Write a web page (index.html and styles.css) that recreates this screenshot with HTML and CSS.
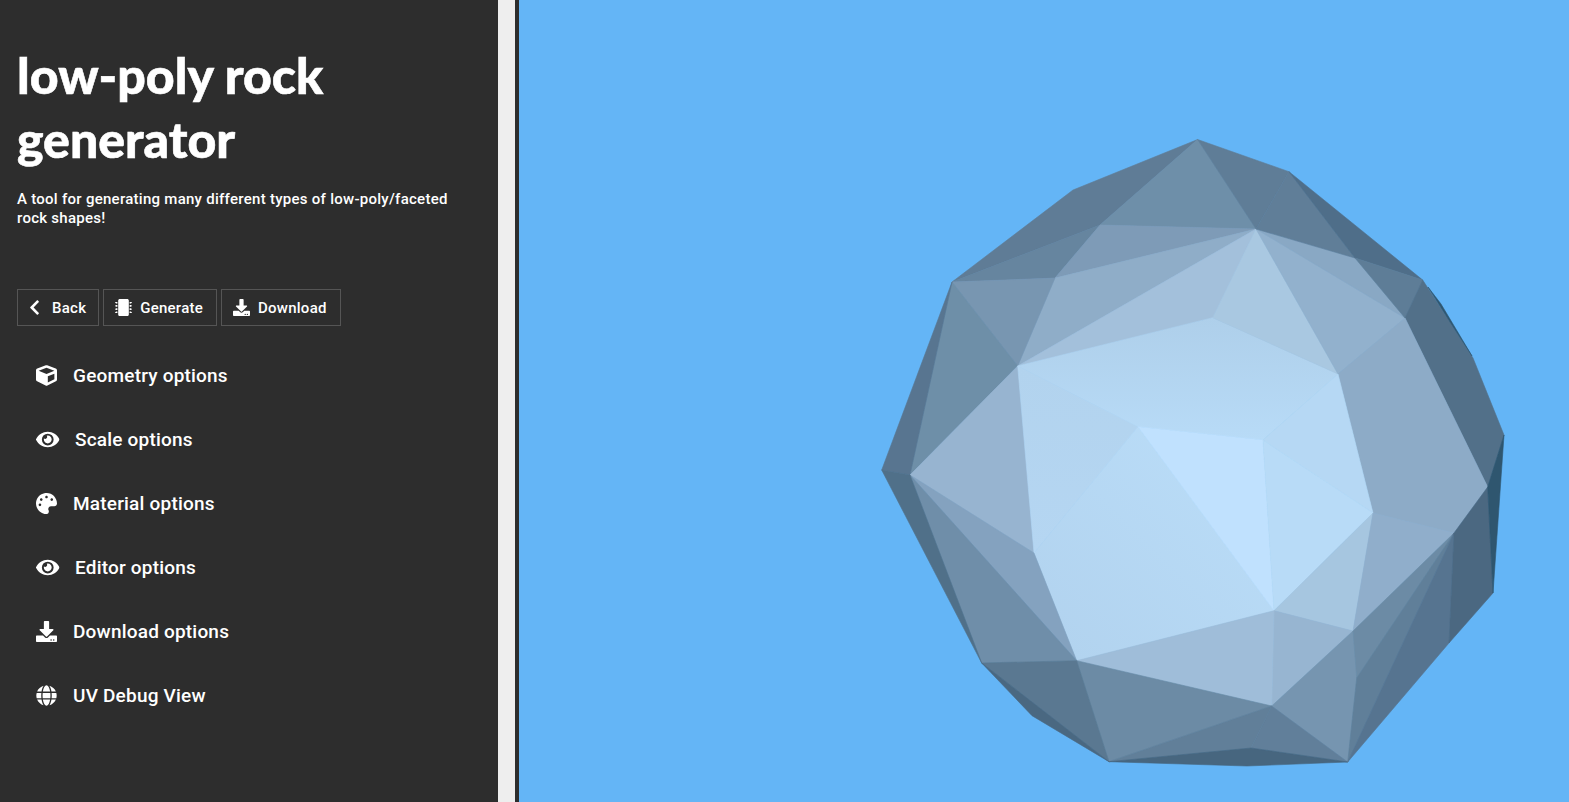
FILE: index.html
```html
<!DOCTYPE html>
<html lang="en">
<head>
<meta charset="utf-8">
<title>low-poly rock generator</title>
<link rel="stylesheet" href="styles.css">
</head>
<body>
<svg class="defs" aria-hidden="true">
  <symbol id="i-chevron" viewBox="0 0 320 512"><path d="M34.52 239.03L228.87 44.69c9.37-9.37 24.57-9.37 33.94 0l22.67 22.67c9.36 9.36 9.37 24.52.04 33.9L131.49 256l154.02 154.75c9.34 9.38 9.32 24.54-.04 33.9l-22.67 22.67c-9.37 9.37-24.57 9.37-33.94 0L34.52 272.97c-9.37-9.37-9.37-24.57 0-33.94z"/></symbol>
  <symbol id="i-chip" viewBox="0 0 512 512"><path d="M416 48v416c0 26.51-21.49 48-48 48H144c-26.51 0-48-21.49-48-48V48c0-26.51 21.49-48 48-48h224c26.51 0 48 21.49 48 48zm96 58v12a6 6 0 0 1-6 6h-18v6a6 6 0 0 1-6 6h-42V88h42a6 6 0 0 1 6 6v6h18a6 6 0 0 1 6 6zm0 96v12a6 6 0 0 1-6 6h-18v6a6 6 0 0 1-6 6h-42v-48h42a6 6 0 0 1 6 6v6h18a6 6 0 0 1 6 6zm0 96v12a6 6 0 0 1-6 6h-18v6a6 6 0 0 1-6 6h-42v-48h42a6 6 0 0 1 6 6v6h18a6 6 0 0 1 6 6zm0 96v12a6 6 0 0 1-6 6h-18v6a6 6 0 0 1-6 6h-42v-48h42a6 6 0 0 1 6 6v6h18a6 6 0 0 1 6 6zM30 376h42v48H30a6 6 0 0 1-6-6v-6H6a6 6 0 0 1-6-6v-12a6 6 0 0 1 6-6h18v-6a6 6 0 0 1 6-6zm0-96h42v48H30a6 6 0 0 1-6-6v-6H6a6 6 0 0 1-6-6v-12a6 6 0 0 1 6-6h18v-6a6 6 0 0 1 6-6zm0-96h42v48H30a6 6 0 0 1-6-6v-6H6a6 6 0 0 1-6-6v-12a6 6 0 0 1 6-6h18v-6a6 6 0 0 1 6-6zm0-96h42v48H30a6 6 0 0 1-6-6v-6H6a6 6 0 0 1-6-6v-12a6 6 0 0 1 6-6h18v-6a6 6 0 0 1 6-6z"/></symbol>
  <symbol id="i-download" viewBox="0 0 512 512"><path d="M216 0h80c13.3 0 24 10.7 24 24v168h87.7c17.8 0 26.7 21.5 14.1 34.1L269.7 378.3c-7.5 7.5-19.8 7.5-27.3 0L90.1 226.1c-12.6-12.6-3.7-34.1 14.1-34.1H192V24c0-13.3 10.7-24 24-24zm296 376v112c0 13.3-10.7 24-24 24H24c-13.3 0-24-10.7-24-24V376c0-13.3 10.7-24 24-24h146.7l49 49c20.1 20.1 52.5 20.1 72.6 0l49-49H488c13.3 0 24 10.7 24 24zm-124 88c0-11-9-20-20-20s-20 9-20 20 9 20 20 20 20-9 20-20zm64 0c0-11-9-20-20-20s-20 9-20 20 9 20 20 20 20-9 20-20z"/></symbol>
  <symbol id="i-cube" viewBox="0 0 512 512"><path d="M239.1 6.3l-208 78c-18.7 7-31.1 25-31.1 45v225.1c0 18.2 10.3 34.8 26.5 42.9l208 104c13.5 6.8 29.4 6.8 42.9 0l208-104c16.3-8.1 26.5-24.8 26.5-42.9V129.3c0-20-12.4-37.9-31.1-44.9l-208-78C262 2.2 250 2.2 239.1 6.3zM256 68.4l192 72v1.1l-192 78-192-78v-1.1l192-72zm32 356V275.5l160-65v133.9l-160 80z"/></symbol>
  <symbol id="i-eye" viewBox="0 0 576 512"><path d="M572.52 241.4C518.29 135.59 410.93 64 288 64S57.68 135.64 3.48 241.41a32.35 32.35 0 0 0 0 29.19C57.71 376.41 165.07 448 288 448s230.32-71.64 284.52-177.41a32.35 32.35 0 0 0 0-29.19zM288 400a144 144 0 1 1 144-144 143.93 143.93 0 0 1-144 144zm0-240a95.31 95.31 0 0 0-25.31 3.79 47.85 47.85 0 0 1-66.9 66.9A95.78 95.78 0 1 0 288 160z"/></symbol>
  <symbol id="i-palette" viewBox="0 0 512 512"><path d="M204.3 5C104.9 24.4 24.8 104.3 5.2 203.4c-37 187 131.7 326.4 258.8 306.7 41.2-6.4 61.4-54.6 42.5-91.7-23.1-45.4 9.9-98.4 60.9-98.4h79.7c35.8 0 64.8-29.6 64.9-65.3C511.5 97.1 368.1-26.9 204.3 5zM96 320c-17.7 0-32-14.3-32-32s14.3-32 32-32 32 14.3 32 32-14.3 32-32 32zm32-128c-17.7 0-32-14.3-32-32s14.3-32 32-32 32 14.3 32 32-14.3 32-32 32zm128-64c-17.7 0-32-14.3-32-32s14.3-32 32-32 32 14.3 32 32-14.3 32-32 32zm128 64c-17.7 0-32-14.3-32-32s14.3-32 32-32 32 14.3 32 32-14.3 32-32 32z"/></symbol>
  <symbol id="i-globe" viewBox="0 0 496 512"><path d="M336.5 160C322 70.7 287.8 8 248 8s-74 62.7-88.5 152h177zM152 256c0 22.2 1.2 43.5 3.3 64h185.3c2.1-20.5 3.3-41.8 3.3-64s-1.2-43.5-3.3-64H155.3c-2.1 20.5-3.3 41.8-3.3 64zm324.7-96c-28.6-67.9-86.5-120.4-158-141.6 24.4 33.8 41.2 84.7 50 141.6h108zM177.2 18.4C105.8 39.6 47.8 92.1 19.3 160h108c8.7-56.9 25.5-107.8 49.9-141.6zM487.4 192H372.7c2.1 21 3.3 42.5 3.3 64s-1.2 43-3.3 64h114.6c5.5-20.5 8.6-41.8 8.6-64s-3.1-43.5-8.5-64zM120 256c0-21.5 1.2-43 3.3-64H8.6C3.2 212.5 0 233.8 0 256s3.2 43.5 8.6 64h114.6c-2-21-3.2-42.5-3.2-64zm39.5 96c14.5 89.3 48.7 152 88.5 152s74-62.7 88.5-152h-177zm159.3 141.6c71.4-21.2 129.4-73.7 158-141.6h-108c-8.8 56.9-25.6 107.8-50 141.6zM19.3 352c28.6 67.9 86.5 120.4 158 141.6-24.4-33.8-41.2-84.7-50-141.6h-108z"/></symbol>
</svg>
<div class="app">
  <aside class="sidebar">
    <h1 class="title">low-poly rock generator</h1>
    <p class="intro">A tool for generating many different types of low-poly/faceted rock shapes!</p>
    <div class="actions">
      <button class="btn btn-back"><svg class="btn-icon chevron"><use href="#i-chevron"/></svg>Back</button>
      <button class="btn btn-generate"><svg class="btn-icon"><use href="#i-chip"/></svg>Generate</button>
      <button class="btn btn-download"><svg class="btn-icon"><use href="#i-download"/></svg>Download</button>
    </div>
    <ul class="menu">
      <li class="menu-item"><svg class="menu-icon"><use href="#i-cube"/></svg>Geometry options</li>
      <li class="menu-item"><svg class="menu-icon eye"><use href="#i-eye"/></svg>Scale options</li>
      <li class="menu-item"><svg class="menu-icon"><use href="#i-palette"/></svg>Material options</li>
      <li class="menu-item"><svg class="menu-icon eye"><use href="#i-eye"/></svg>Editor options</li>
      <li class="menu-item"><svg class="menu-icon"><use href="#i-download"/></svg>Download options</li>
      <li class="menu-item"><svg class="menu-icon"><use href="#i-globe"/></svg>UV Debug View</li>
    </ul>
  </aside>
  <div class="splitter"></div>
  <div class="divider"></div>
  <main class="viewport">
    <svg class="rock" viewBox="519 0 1050 802" aria-label="low-poly rock">
      <defs>
        <linearGradient id="g-top" x1="0" y1="0" x2="0" y2="1"><stop offset="0" stop-color="#aecfea"/><stop offset="1" stop-color="#b8dbf7"/></linearGradient>
        <linearGradient id="g-low" x1="1" y1="0" x2="0" y2="1"><stop offset="0" stop-color="#bbdef9"/><stop offset="1" stop-color="#b1d2ee"/></linearGradient>
        <linearGradient id="g-left" x1="0" y1="0" x2="0" y2="1"><stop offset="0" stop-color="#b2d3ee"/><stop offset="1" stop-color="#b5d6f2"/></linearGradient>
      </defs>
      <polygon class="f" fill="#5f7c96" stroke="#5f7c96" points="1197.6,139.5 1073,190 952,282 1100,225"/>
      <polygon class="f" fill="#66859f" stroke="#66859f" points="952,282 1100,225 1055,278"/>
      <polygon class="f" fill="#6e8fa9" stroke="#6e8fa9" points="1197.6,139.5 1100,225 1256,229"/>
      <polygon class="f" fill="#7e9bb7" stroke="#7e9bb7" points="1100,225 1055,278 1256,229"/>
      <polygon class="f" fill="#8fadc8" stroke="#8fadc8" points="1055,278 1017.7,366 1256,229"/>
      <polygon class="f" fill="#a3c0db" stroke="#a3c0db" points="1017.7,366 1212.7,317.7 1256,229"/>
      <polygon class="f" fill="#7896b1" stroke="#7896b1" points="952,282 1055,278 1017.7,366"/>
      <polygon class="f" fill="#6e8fa8" stroke="#6e8fa8" points="952,282 1017.7,366 910,475"/>
      <polygon class="f" fill="#587590" stroke="#587590" points="952,282 881.7,470 910,475"/>
      <polygon class="f" fill="#97b4d0" stroke="#97b4d0" points="1017.7,366 910,475 1034,553"/>
      <polygon class="f" fill="url(#g-left)" stroke="url(#g-left)" points="1017.7,366 1138,426.7 1034,553"/>
      <polygon class="f" fill="url(#g-top)" stroke="url(#g-top)" points="1017.7,366 1212.7,317.7 1338,374 1263,440 1138,426.7"/>
      <polygon class="f" fill="url(#g-low)" stroke="url(#g-low)" points="1034,553 1138,426.7 1274,610.7 1076.7,660.7"/>
      <polygon class="f" fill="#a9c8e1" stroke="#a9c8e1" points="1212.7,317.7 1256,229 1338,374"/>
      <polygon class="f" fill="#92b1cd" stroke="#92b1cd" points="1256,229 1338,374 1405,318"/>
      <polygon class="f" fill="#89a8c4" stroke="#89a8c4" points="1256,229 1355,258 1405,318"/>
      <polygon class="f" fill="#5f7d97" stroke="#5f7d97" points="1197.6,139.5 1289,171.7 1256,229"/>
      <polygon class="f" fill="#607e98" stroke="#607e98" points="1289,171.7 1355,258 1256,229"/>
      <polygon class="f" fill="#4f6e89" stroke="#4f6e89" points="1289,171.7 1422.7,280 1355,258"/>
      <polygon class="f" fill="#5e7d97" stroke="#5e7d97" points="1355,258 1422.7,280 1405,318"/>
      <polygon class="f" fill="#527089" stroke="#527089" points="1405,318 1422.7,280 1473,358 1504,435 1487.7,487"/>
      <polygon class="f" fill="#2f566f" stroke="#2f566f" points="1428,287 1441,304 1472,356 1450,322"/>
      <polygon class="f" fill="#8dabc7" stroke="#8dabc7" points="1405,318 1338,374 1373,513 1454,533 1487.7,487"/>
      <polygon class="f" fill="#b6d8f4" stroke="#b6d8f4" points="1338,374 1263,440 1373,513"/>
      <polygon class="f" fill="#c0e1fe" stroke="#c0e1fe" points="1138,426.7 1263,440 1274,610.7"/>
      <polygon class="f" fill="#b8dbf7" stroke="#b8dbf7" points="1263,440 1373,513 1274,610.7"/>
      <polygon class="f" fill="#a6c6e0" stroke="#a6c6e0" points="1274,610.7 1373,513 1353,631"/>
      <polygon class="f" fill="#90aecb" stroke="#90aecb" points="1373,513 1454,533 1353,631"/>
      <polygon class="f" fill="#97b5d1" stroke="#97b5d1" points="1274,610.7 1353,631 1271.7,706"/>
      <polygon class="f" fill="#9fbdd9" stroke="#9fbdd9" points="1274,610.7 1271.7,706 1076.7,660.7"/>
      <polygon class="f" fill="#7695b0" stroke="#7695b0" points="1353,631 1356.7,678 1347.7,762 1271.7,706"/>
      <polygon class="f" fill="#617f9a" stroke="#617f9a" points="1271.7,706 1251,748 1347.7,762"/>
      <polygon class="f" fill="#6c8ba5" stroke="#6c8ba5" points="1076.7,660.7 1271.7,706 1109,761.7"/>
      <polygon class="f" fill="#617f99" stroke="#617f99" points="1109,761.7 1271.7,706 1251,748"/>
      <polygon class="f" fill="#47667f" stroke="#47667f" points="1109,761.7 1251,748 1347.7,762 1247,766"/>
      <polygon class="f" fill="#6c8ba5" stroke="#6c8ba5" points="1353,631 1454,533 1356.7,678"/>
      <polygon class="f" fill="#607f99" stroke="#607f99" points="1356.7,678 1454,533 1347.7,762"/>
      <polygon class="f" fill="#567490" stroke="#567490" points="1454,533 1449,643 1347.7,762"/>
      <polygon class="f" fill="#4b6881" stroke="#4b6881" points="1454,533 1487.7,487 1493,593 1449,643"/>
      <polygon class="f" fill="#2f566f" stroke="#2f566f" points="1504,435 1493,593 1487.7,487"/>
      <polygon class="f" fill="#84a2bf" stroke="#84a2bf" points="910,475 1034,553 1076.7,660.7"/>
      <polygon class="f" fill="#6f8ea9" stroke="#6f8ea9" points="910,475 1076.7,660.7 981.7,663"/>
      <polygon class="f" fill="#507089" stroke="#507089" points="881.7,470 910,475 981.7,663"/>
      <polygon class="f" fill="#5a7891" stroke="#5a7891" points="981.7,663 1076.7,660.7 1109,761.7"/>
      <polygon class="f" fill="#4a6881" stroke="#4a6881" points="981.7,663 1109,761.7 1032,715.7"/>
    </svg>
  </main>
</div>
</body>
</html>
```
FILE: styles.css
```css
* { box-sizing: border-box; }
html, body { margin: 0; height: 100%; overflow: hidden; }
.defs { display: none; }
.app { display: flex; height: 802px; font-family: Roboto, "Liberation Sans", sans-serif; color: #fff; }
.sidebar { width: 498px; flex: none; background: #2d2d2d; padding: 43px 17px 0; }
.title { margin: 0; width: 400px; font-family: "Lato", sans-serif; font-weight: 900; font-size: 50px; line-height: 64px; -webkit-text-stroke: 0.6px #fff; }
.intro { margin: 19px 0 0; width: 440px; font-size: 15px; font-weight: 500; letter-spacing: 0.27px; line-height: 19px; }
.actions { display: flex; gap: 4px; margin-top: 61px; }
.btn { display: flex; align-items: center; height: 37px; padding: 0 12px; background: none; border: 1px solid #555; color: #fff; font: 500 15px Roboto, sans-serif; letter-spacing: 0.25px; }
.btn-icon { width: 17px; height: 17px; margin-right: 7px; fill: #fff; flex: none; }
.chevron { width: 11px; margin-right: 12px; }
.btn-back { padding: 0 12px 0 11px; }
.btn-generate { padding: 0 13px 0 11px; }
.btn-generate .btn-icon { margin-right: 8px; }
.btn-download { padding: 0 13px 0 11px; }
.btn-download .btn-icon { margin-right: 8px; }
.menu { list-style: none; margin: 17px 0 0; padding: 0; }
.menu-item { display: flex; align-items: center; height: 64px; padding-left: 19px; font-size: 19px; font-weight: 500; letter-spacing: 0.2px; }
.menu-icon { width: 21px; height: 21px; margin-right: 16px; fill: #fff; flex: none; }
.menu-icon.eye { width: 23.5px; margin-right: 15.5px; }
.splitter { width: 17px; flex: none; background: #eeeeee; }
.divider { width: 4px; flex: none; background: #2d2d2d; }
.viewport { flex: 1; background: #64b5f6; }
.rock { display: block; width: 100%; height: 100%; }
.f { stroke-width: 0.6; stroke-linejoin: round; }
```
